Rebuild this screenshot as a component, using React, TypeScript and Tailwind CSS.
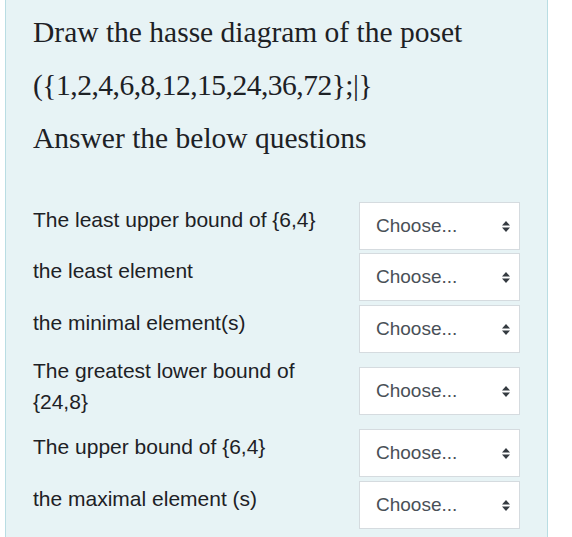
const rows = [
  { label: 'The least upper bound of {6,4}', rowCls: '', selCls: '', lblCls: 'leading-[35px]' },
  { label: 'the least element', rowCls: 'mt-[3px]', selCls: '', lblCls: 'leading-[35px]' },
  { label: 'the minimal element(s)', rowCls: 'mt-[4px]', selCls: '', lblCls: 'leading-[35px]' },
  {
    label: 'The greatest lower bound of {24,8}',
    rowCls: 'mt-0',
    selCls: 'mt-[14px]',
    lblCls: 'leading-[31px] pt-[2px]',
  },
  { label: 'The upper bound of {6,4}', rowCls: 'mt-[12px]', selCls: '', lblCls: 'leading-[35px]' },
  { label: 'the maximal element (s)', rowCls: 'mt-[4px]', selCls: '', lblCls: 'leading-[35px]' },
];

function SortArrows() {
  return (
    <svg width="10" height="13" viewBox="0 0 10 13" className="shrink-0">
      <path d="M1 5.5 L5 1 L9 5.5 Z" fill="#343a40" />
      <path d="M1 7.5 L5 12 L9 7.5 Z" fill="#343a40" />
    </svg>
  );
}

function ChooseSelect({ className }: { className: string }) {
  return (
    <div
      className={`w-[161px] h-[48px] shrink-0 bg-white border border-[#d5dbdf] flex items-center justify-between pl-[16px] pr-[8px] ${className}`}
    >
      <span className="text-[19px] text-[#495057]">Choose...</span>
      <SortArrows />
    </div>
  );
}

export default function App() {
  return (
    <div className="w-[572px] h-[537px] bg-white overflow-hidden font-['Liberation_Sans',Arial,sans-serif]">
      <div className="ml-[5px] w-[543px] h-full bg-[#e7f3f5] border-x border-[#b9dde3] pl-[27px] pt-[6px]">
        <div className="font-['Liberation_Serif','Times_New_Roman',serif] text-[29.5px] leading-[53px] text-[#1d2125]">
          <p>Draw the hasse diagram of the poset</p>
          <p className="tracking-[-0.5px]">({'{'}1,2,4,6,8,12,15,24,36,72{'}'};|{'}'}</p>
          <p>Answer the below questions</p>
        </div>

        <div className="mt-[37px] flex flex-col">
          {rows.map((r) => (
            <div key={r.label} className={`flex items-start ${r.rowCls}`}>
              <div className={`w-[326px] shrink-0 pr-[26px] text-[21px] text-[#1d2125] ${r.lblCls}`}>
                {r.label}
              </div>
              <ChooseSelect className={r.selCls} />
            </div>
          ))}
        </div>
      </div>
    </div>
  );
}
